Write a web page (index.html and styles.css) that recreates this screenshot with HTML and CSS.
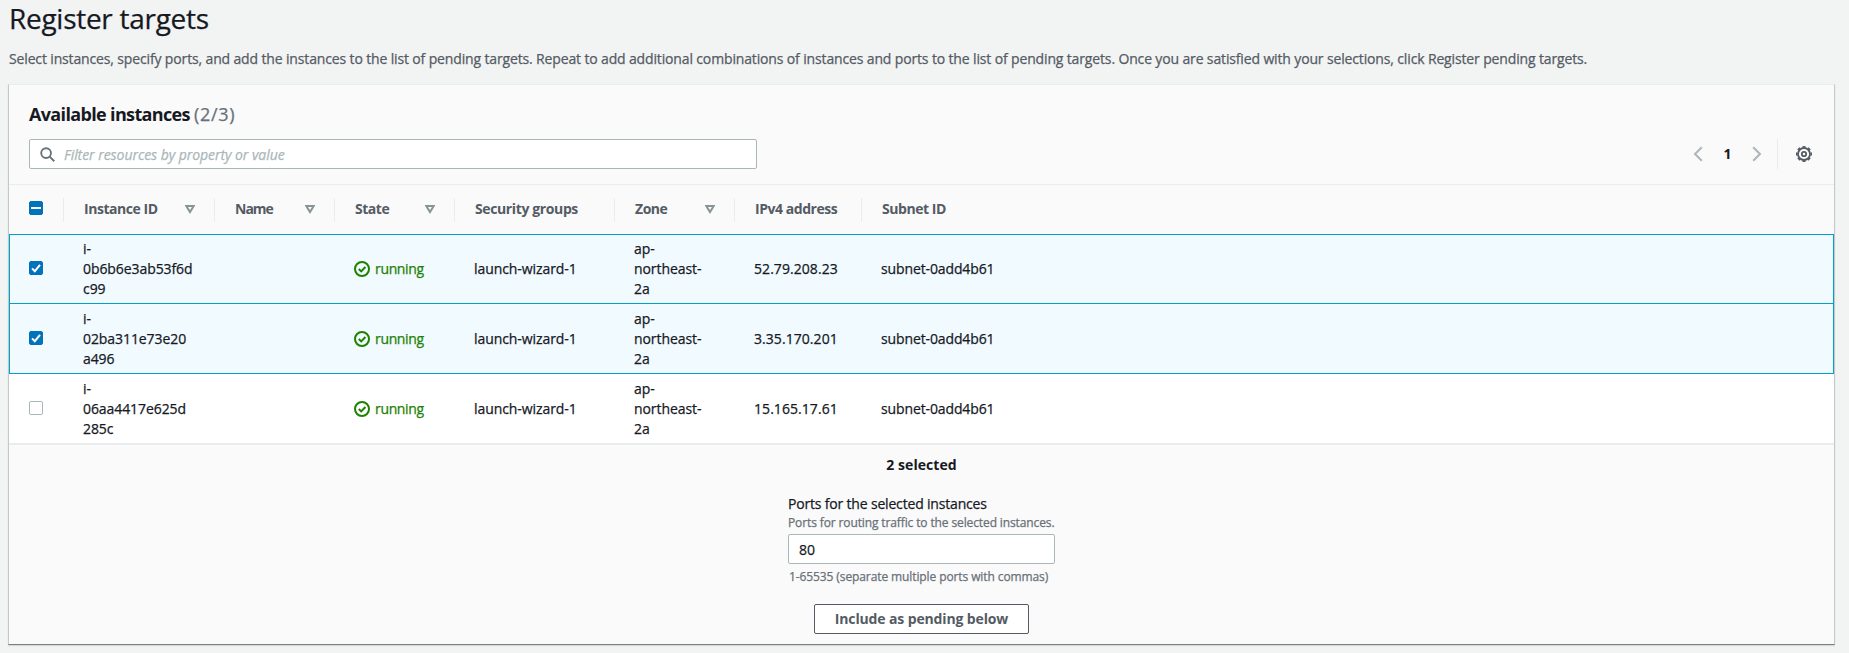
FILE: index.html
```html
<!DOCTYPE html>
<html lang="en">
<head>
<meta charset="utf-8">
<title>Register targets</title>
<link rel="stylesheet" href="styles.css">
</head>
<body>
<svg class="sprite" aria-hidden="true">
  <symbol id="sort" viewBox="0 0 10 9"><path d="M1.3 1h7.4L5 7z"/></symbol>
  <symbol id="ok" viewBox="0 0 16 16"><circle cx="8" cy="8" r="7"/><path d="M4.8 8l2.4 2.4 4.2-4.4"/></symbol>
  <symbol id="tick" viewBox="0 0 14 14"><path d="M3 7.4l2.8 2.8L11 3.8"/></symbol>
</svg>
<main class="page">
  <h1 class="title">Register targets</h1>
  <p class="description">Select instances, specify ports, and add the instances to the list of pending targets. Repeat to add additional combinations of instances and ports to the list of pending targets. Once you are satisfied with your selections, click Register pending targets.</p>
  <section class="card">
    <header class="card-header">
      <h2 class="card-title">Available instances <span class="counter">(2/3)</span></h2>
      <div class="tools">
        <div class="search">
          <svg class="search-icon" viewBox="0 0 16 16"><circle cx="6.5" cy="6.5" r="5.2"/><path d="M10.3 10.3l4.9 4.9"/></svg>
          <span class="placeholder">Filter resources by property or value</span>
        </div>
        <div class="pager">
          <svg class="chevron" viewBox="0 0 10 16"><path d="M8.8 1.2L2 8l6.8 6.8"/></svg>
          <span class="page-number">1</span>
          <svg class="chevron" viewBox="0 0 10 16"><path d="M1.2 1.2L8 8l-6.8 6.8"/></svg>
          <div class="settings">
            <svg class="gear" viewBox="0 0 16 16"><circle cx="8" cy="8" r="6"/><circle class="teeth" cx="8" cy="8" r="7.200" pathLength="80"/><circle cx="8" cy="8" r="2.200"/></svg>
          </div>
        </div>
      </div>
    </header>
    <div class="row head">
      <div class="select"><span class="box mixed"></span></div>
      <div class="th">Instance ID<svg class="sort"><use href="#sort"/></svg></div>
      <div class="th th-name">Name<svg class="sort"><use href="#sort"/></svg></div>
      <div class="th">State<svg class="sort"><use href="#sort"/></svg></div>
      <div class="th th-groups">Security groups</div>
      <div class="th">Zone<svg class="sort"><use href="#sort"/></svg></div>
      <div class="th">IPv4 address</div>
      <div class="th">Subnet ID</div>
    </div>
    <div class="row item selected">
      <div class="select"><span class="box checked"><svg class="tick"><use href="#tick"/></svg></span></div>
      <div class="td">i-<br>0b6b6e3ab53f6d<br>c99</div>
      <div class="td"></div>
      <div class="td state"><svg class="ok"><use href="#ok"/></svg><span class="running">running</span></div>
      <div class="td">launch-wizard-1</div>
      <div class="td">ap-<br>northeast-<br>2a</div>
      <div class="td ip">52.79.208.23</div>
      <div class="td subnet">subnet-0add4b61</div>
    </div>
    <div class="row item selected">
      <div class="select"><span class="box checked"><svg class="tick"><use href="#tick"/></svg></span></div>
      <div class="td">i-<br>02ba311e73e20<br>a496</div>
      <div class="td"></div>
      <div class="td state"><svg class="ok"><use href="#ok"/></svg><span class="running">running</span></div>
      <div class="td">launch-wizard-1</div>
      <div class="td">ap-<br>northeast-<br>2a</div>
      <div class="td ip">3.35.170.201</div>
      <div class="td subnet">subnet-0add4b61</div>
    </div>
    <div class="row item">
      <div class="select"><span class="box"></span></div>
      <div class="td">i-<br>06aa4417e625d<br>285c</div>
      <div class="td"></div>
      <div class="td state"><svg class="ok"><use href="#ok"/></svg><span class="running">running</span></div>
      <div class="td">launch-wizard-1</div>
      <div class="td">ap-<br>northeast-<br>2a</div>
      <div class="td ip">15.165.17.61</div>
      <div class="td subnet">subnet-0add4b61</div>
    </div>
    <footer class="card-footer">
      <div class="selected-count">2 selected</div>
      <div class="field">
        <div class="label">Ports for the selected instances</div>
        <div class="hint">Ports for routing traffic to the selected instances.</div>
        <div class="input">80</div>
        <div class="constraint">1-65535 (separate multiple ports with commas)</div>
      </div>
      <button class="button" type="button">Include as pending below</button>
    </footer>
  </section>
</main>
</body>
</html>
```
FILE: styles.css
```css
* { box-sizing: border-box; }

body {
  margin: 0;
  height: 653px;
  overflow: hidden;
  background: #f2f3f3;
  color: #16191f;
  font: 400 14px/20px "Open Sans", "Noto Sans", sans-serif;
  letter-spacing: -0.08px;
  -webkit-text-stroke: 0.25px;
}

.sprite { display: none; }

svg { display: block; flex: none; fill: none; }

.page { padding: 0 14px 0 8px; }

.title {
  margin: 0;
  padding: 0 0 1px 1px;
  font-size: 28px;
  line-height: 36px;
  font-weight: 400;
  letter-spacing: -0.28px;
}

.description {
  margin: 0;
  padding: 12px 0 15px 1px;
  color: #545b64;
  letter-spacing: -0.144px;
  white-space: nowrap;
}

.card {
  height: 561px;
  border: 1px solid #c3c8ca;
  border-top-color: #eaeded;
  border-bottom-color: #738284;
  background: #fafafa;
  box-shadow: 0 1px 1px #d5dbdb;
}

.card-header {
  height: 100px;
  padding: 18px 20px 15px;
  border-bottom: 1px solid #eaeded;
}

.card-title {
  margin: 0;
  height: 36px;
  font-size: 18px;
  line-height: 22px;
  font-weight: 700;
  letter-spacing: -0.65px;
  -webkit-text-stroke: 0;
}

.counter { color: #687078; font-weight: 400; letter-spacing: 0.7px; -webkit-text-stroke: 0.25px; }

.tools { display: flex; justify-content: space-between; }

.search {
  display: flex;
  align-items: center;
  width: 728px;
  height: 30px;
  padding-left: 10px;
  border: 1px solid #aab7b8;
  border-radius: 2px;
  background: #fff;
}

.search-icon { width: 15px; height: 15px; stroke: #687078; stroke-width: 2; }

.placeholder {
  padding: 1px 0 0 9px;
  color: #aab7b8;
  font-style: italic;
  letter-spacing: -0.05px;
}

.pager { display: flex; align-items: center; height: 30px; }

.chevron { width: 10px; height: 16px; stroke: #aab7b8; stroke-width: 2; }

.page-number {
  width: 49px;
  text-align: center;
  font-weight: 700;
  -webkit-text-stroke: 0;
}

.settings {
  display: flex;
  align-items: center;
  justify-content: flex-end;
  width: 37px;
  height: 30px;
  margin-left: 15px;
  border-left: 1px solid #eaeded;
}

.gear { width: 16px; height: 16px; margin-right: 2px; stroke: #545b64; stroke-width: 1.8; }

.teeth { stroke-width: 1.6; stroke-dasharray: 5.500 4.500; stroke-dashoffset: 2.750; }

.row {
  display: grid;
  grid-template-columns: 54px 151px 120px 120px 160px 120px 127px 1fr;
  align-items: center;
}

.head { height: 49px; }

.select { padding-left: 20px; }

.head .select { padding-bottom: 3px; }

.box {
  display: flex;
  align-items: center;
  justify-content: center;
  width: 14px;
  height: 14px;
  border: 1px solid #aab7b8;
  border-radius: 2px;
  background: #fff;
}

.mixed, .checked { border-color: #0073bb; background: #0073bb; }

.mixed::before { content: ""; width: 10px; height: 2px; background: #fff; }

.tick { width: 14px; height: 14px; stroke: #fff; stroke-width: 2; }

.th {
  display: flex;
  align-items: center;
  justify-content: space-between;
  height: 24px;
  padding: 0 19px 1px 20px;
  border-left: 1px solid #eaeded;
  color: #545b64;
  font-weight: 700;
  letter-spacing: -0.46px;
  white-space: nowrap;
  -webkit-text-stroke: 0;
}

.th-name { letter-spacing: -1px; }

.th-groups { letter-spacing: -0.38px; }

.sort { width: 10px; height: 9px; stroke: #879596; stroke-width: 2; }

.item { height: 70px; padding-top: 1px; border-bottom: 1px solid #eaeded; background: #fff; }

.item:not(.selected) { height: 71px; border-bottom-width: 2px; }

.selected {
  border: 1px solid #00a1c9;
  border-top: 0;
  background: #f1faff;
}

.head + .selected { border-top: 1px solid #00a1c9; padding-top: 0; }

.selected .select { padding-left: 19px; }

.selected { grid-template-columns: 53px 151px 120px 120px 160px 120px 127px 1fr; }

.item .select { padding-bottom: 2px; }

.td { padding-left: 20px; white-space: nowrap; }

.state { display: flex; align-items: center; }

.ok { width: 16px; height: 16px; stroke: #1d8102; stroke-width: 2; }

.running { padding-left: 5px; color: #1d8102; letter-spacing: -0.34px; }

.ip { letter-spacing: 0.06px; }

.subnet { letter-spacing: -0.12px; }

.card-footer {
  display: flex;
  flex-direction: column;
  align-items: center;
  padding-top: 10px;
}

.selected-count { font-weight: 700; letter-spacing: 0.07px; -webkit-text-stroke: 0; }

.field { width: 267px; padding-top: 19px; }

.label { letter-spacing: -0.18px; }

.hint, .constraint {
  color: #687078;
  font-size: 12px;
  line-height: 16px;
  letter-spacing: -0.12px;
  white-space: nowrap;
}

.hint { padding-top: 1px; }

.input {
  height: 30px;
  margin-top: 3px;
  padding: 5px 10px;
  border: 1px solid #aab7b8;
  border-radius: 2px;
  background: #fff;
}

.constraint { padding: 5px 0 0 1px; letter-spacing: -0.1px; }

.button {
  width: 215px;
  height: 30px;
  margin-top: 19px;
  padding: 0;
  border: 1px solid #545b64;
  border-radius: 2px;
  background: #fff;
  color: #545b64;
  font: inherit;
  font-weight: 700;
  letter-spacing: -0.13px;
  -webkit-text-stroke: 0;
}
```
